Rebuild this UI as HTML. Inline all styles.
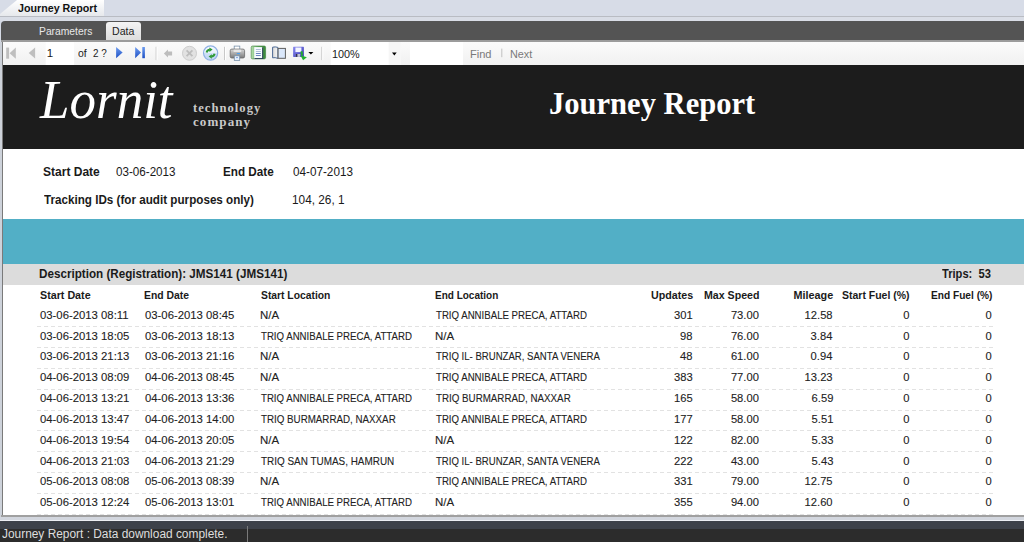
<!DOCTYPE html>
<html><head><meta charset="utf-8">
<style>
html,body{margin:0;padding:0;}
body{width:1024px;height:542px;position:relative;overflow:hidden;background:#d5dae5;font-family:"Liberation Sans",sans-serif;}
.a{position:absolute;}
.t{position:absolute;white-space:nowrap;line-height:0;}
.dash{position:absolute;left:37px;width:956px;height:1px;background-image:linear-gradient(to right,#e2e2e2 0,#e2e2e2 4px,transparent 4px);background-size:7px 1px;}
</style></head><body>
<!-- top title strip -->
<div class="a" style="left:0;top:0;width:1024px;height:16px;background:#d7dce7;"></div>
<div class="a" style="left:0;top:0;width:104px;height:16px;background:linear-gradient(#ffffff,#e6e8ec);clip-path:polygon(17px 0,104px 0,104px 16px,0 16px,0 14px);"></div>
<div class="a" style="left:0;top:16px;width:1024px;height:1px;background:#b9bcc3;"></div>
<div class="a" style="left:0;top:17px;width:1024px;height:4px;background:#d9dde6;"></div>
<!-- dark tab panel -->
<div class="a" style="left:1px;top:21px;width:1023px;height:20px;background:#545454;border-top-left-radius:4px;"></div>
<div class="a" style="left:106px;top:22px;width:35px;height:19px;background:linear-gradient(#f4f4f4,#dcdcdc);border-radius:3px 3px 0 0;"></div>
<div class="a" style="left:1px;top:40px;width:1023px;height:2px;background:#9c9c9c;"></div>
<!-- toolbar -->
<div class="a" style="left:0;top:42px;width:2px;height:475px;background:#cdd2da;"></div><div class="a" style="left:2px;top:42px;width:1px;height:475px;background:#7a7a7a;"></div>
<div class="a" style="left:3px;top:42px;width:1021px;height:23px;background:linear-gradient(#fbfbfb,#f1f1f1);"></div>
<!-- TOOLBAR -->
<svg class="a" style="left:0;top:42px" width="560" height="23" viewBox="0 0 560 23">
<defs>
<linearGradient id="gb" x1="0" y1="0" x2="0" y2="1"><stop offset="0" stop-color="#6c9cf0"/><stop offset="1" stop-color="#1d4fc4"/></linearGradient>
<linearGradient id="gr" x1="0" y1="0" x2="0" y2="1"><stop offset="0" stop-color="#f6faff"/><stop offset="0.5" stop-color="#e6f0fc"/><stop offset="0.5" stop-color="#cfe1f7"/><stop offset="1" stop-color="#bcd4f2"/></linearGradient>
<linearGradient id="gp" x1="0" y1="0" x2="0" y2="1"><stop offset="0" stop-color="#d8d8d8"/><stop offset="1" stop-color="#7a7a7a"/></linearGradient>
<linearGradient id="gf" x1="0" y1="0" x2="1" y2="1"><stop offset="0" stop-color="#8c8cf0"/><stop offset="1" stop-color="#3a3ab8"/></linearGradient>
<linearGradient id="gg" x1="0" y1="0" x2="1" y2="0"><stop offset="0" stop-color="#b8e0b0"/><stop offset="0.5" stop-color="#5aa858"/><stop offset="1" stop-color="#3a8a3a"/></linearGradient>
<linearGradient id="gbk" x1="0" y1="0" x2="1" y2="0"><stop offset="0" stop-color="#d8d8d8"/><stop offset="1" stop-color="#f8f8f8"/></linearGradient>
</defs>
<!-- page textbox -->
<rect x="45.7" y="0" width="28.4" height="23" fill="#ffffff"/>
<!-- first -->
<rect x="6.2" y="5.6" width="2.9" height="11.1" fill="#bfbfbf"/>
<polygon points="15.8,5.6 9.6,11.15 15.8,16.7" fill="#bfbfbf"/>
<!-- prev -->
<polygon points="35.1,5.6 28.7,11.0 35.1,16.4" fill="#bfbfbf"/>
<!-- next -->
<polygon points="116.1,5 122.6,10.6 116.1,16.2" fill="url(#gb)"/>
<!-- last -->
<polygon points="135.2,5 141,10.6 135.2,16.2" fill="url(#gb)"/>
<rect x="142.3" y="5" width="2.6" height="11.2" fill="url(#gb)"/>
<!-- separators -->
<rect x="155.6" y="4.8" width="1" height="13.3" fill="#c8c8c8"/><rect x="156.6" y="4.8" width="1" height="13.3" fill="#ffffff"/>
<rect x="224" y="4.8" width="1" height="13.3" fill="#c8c8c8"/><rect x="225" y="4.8" width="1" height="13.3" fill="#ffffff"/>
<rect x="321.3" y="4.8" width="1" height="13.3" fill="#c8c8c8"/><rect x="322.3" y="4.8" width="1" height="13.3" fill="#ffffff"/>
<!-- back arrow -->
<polygon points="163.9,11.5 168,7.5 168,9.6 172.1,9.6 172.1,13.4 168,13.4 168,15.4" fill="#bdbdbd"/>
<!-- stop -->
<circle cx="189.5" cy="11.3" r="7" fill="#e2e2e2" stroke="#cdcdcd" stroke-width="1"/>
<path d="M186.6 8.4 L192.4 14.2 M192.4 8.4 L186.6 14.2" stroke="#bdbdbd" stroke-width="1.8"/>
<!-- refresh -->
<circle cx="210.6" cy="11.05" r="7.1" fill="url(#gr)" stroke="#8fb0e4" stroke-width="1.2"/>
<path d="M206.6 10.4 Q207.2 7.9 209.8 7.7" stroke="#2e9a36" stroke-width="2" fill="none"/>
<polygon points="209.4,5.4 212.6,7.6 209.4,10.0" fill="#2e9a36"/>
<path d="M214.6 11.7 Q214.0 14.2 211.4 14.4" stroke="#2e9a36" stroke-width="2" fill="none"/>
<polygon points="211.8,12.2 208.6,14.4 211.8,16.8" fill="#2e9a36"/>
<!-- printer -->
<rect x="234.2" y="4.1" width="5.6" height="3.8" fill="#ffffff" stroke="#7890a8" stroke-width="0.8"/>
<rect x="230.2" y="7.1" width="14.4" height="8.9" rx="1.6" fill="url(#gp)" stroke="#6a6a6a" stroke-width="0.8"/>
<rect x="233.6" y="7.6" width="7.6" height="2.4" fill="#e6e6e6"/>
<rect x="236.8" y="11" width="3.3" height="1.1" fill="#4aa0f0"/>
<rect x="234.3" y="13.8" width="5.4" height="4.6" fill="#e6f0fc" stroke="#7890a8" stroke-width="0.8"/>
<circle cx="237" cy="15.6" r="0.7" fill="#3a70d0"/>
<!-- page layout -->
<rect x="251.2" y="4" width="14.4" height="12.9" rx="1.4" fill="url(#gg)" stroke="#3d7d3d" stroke-width="0.6"/>
<rect x="254.2" y="5.1" width="8.2" height="11.3" fill="#f8fbff"/>
<rect x="262.2" y="5.4" width="1" height="11.3" fill="#2a3a5a"/>
<rect x="254.6" y="16.1" width="8.6" height="0.9" fill="#2a3a5a"/>
<path d="M255.9 7.5 H260.8 M255.9 9.5 H260.8" stroke="#a8b8d4" stroke-width="0.9"/>
<path d="M255.9 11.5 H260.8 M255.9 13.5 H260.8" stroke="#5a78b8" stroke-width="0.9"/>
<!-- page setup (book) -->
<path d="M272.6 5.2 Q275.2 4.5 277.9 5.4 L277.9 16.4 Q275.2 15.2 272.6 15.8 Z" fill="url(#gbk)" stroke="#3a5a8a" stroke-width="0.9"/>
<rect x="278.1" y="6.4" width="7.3" height="9.9" fill="#dae7fa" stroke="#5e5e5e" stroke-width="1"/>
<!-- save -->
<rect x="293.1" y="4.7" width="10.8" height="10.2" rx="0.6" fill="url(#gf)"/>
<rect x="295.4" y="5.5" width="6" height="4.6" fill="#f2f4ff"/>
<rect x="295.8" y="12" width="4.4" height="2.9" fill="#c4c4d4"/>
<rect x="295.8" y="12" width="1.6" height="2.9" fill="#303050"/>
<path d="M301.4 9.2 L302.2 13.4" stroke="#22a830" stroke-width="2"/>
<polygon points="300.3,13.2 306.9,15.3 303.1,18.2" fill="#22b030"/>
<polygon points="308.4,9.9 313.4,9.9 310.9,12.6" fill="#000"/>
<!-- zoom combo -->
<rect x="330.7" y="0" width="70" height="23" fill="#ffffff"/>
<rect x="388.7" y="0" width="12" height="23" fill="#f6f6f6"/>
<polygon points="392,10.5 396.7,10.5 394.35,13.4" fill="#000"/>
<!-- find textbox -->
<rect x="410" y="0" width="53" height="23" fill="#ffffff"/>
<rect x="501.3" y="6.6" width="1" height="8.6" fill="#c0c0c0"/>
</svg>

<!-- report -->
<div class="a" style="left:3px;top:65px;width:1021px;height:450px;background:#fff;"></div>
<div class="a" style="left:3px;top:65px;width:1021px;height:84px;background:#1c1c1c;"></div>
<div class="a" style="left:3px;top:219px;width:1021px;height:45px;background:#52afc6;"></div>
<div class="a" style="left:3px;top:264px;width:1021px;height:21px;background:#dcdcdc;"></div>
<div class="dash" style="top:326px"></div>
<div class="dash" style="top:347px"></div>
<div class="dash" style="top:368px"></div>
<div class="dash" style="top:389px"></div>
<div class="dash" style="top:410px"></div>
<div class="dash" style="top:430px"></div>
<div class="dash" style="top:451px"></div>
<div class="dash" style="top:472px"></div>
<div class="dash" style="top:493px"></div>
<div class="dash" style="top:514px"></div>

<!-- bottom -->
<div class="a" style="left:1px;top:515px;width:1023px;height:2px;background:#a0a0a0;"></div>
<div class="a" style="left:0;top:517px;width:1024px;height:3px;background:#d2d6de;"></div>
<div class="a" style="left:0;top:520px;width:1024px;height:1px;background:#eceef3;"></div>
<div class="a" style="left:0;top:521px;width:1024px;height:8px;background:#3d4149;"></div>
<div class="a" style="left:0;top:529px;width:1024px;height:13px;background:#2c2c2c;"></div>
<div class="a" style="left:247px;top:526px;width:1px;height:16px;background:#7a7a7a;"></div>
<div class="t" style="left:43.04px;top:171.60px;font-family:'Liberation Sans', sans-serif;font-size:12.5px;font-weight:700;color:#1a1a1a;transform:scaleX(0.9621);transform-origin:0 0;">Start Date</div>
<div class="t" style="left:116.40px;top:171.60px;font-family:'Liberation Sans', sans-serif;font-size:12.5px;font-weight:400;color:#1a1a1a;transform:scaleX(0.9312);transform-origin:0 0;">03-06-2013</div>
<div class="t" style="left:223.46px;top:171.60px;font-family:'Liberation Sans', sans-serif;font-size:12.5px;font-weight:700;color:#1a1a1a;transform:scaleX(0.9358);transform-origin:0 0;">End Date</div>
<div class="t" style="left:293.00px;top:171.60px;font-family:'Liberation Sans', sans-serif;font-size:12.5px;font-weight:400;color:#1a1a1a;transform:scaleX(0.9375);transform-origin:0 0;">04-07-2013</div>
<div class="t" style="left:44.00px;top:200.20px;font-family:'Liberation Sans', sans-serif;font-size:12.5px;font-weight:700;color:#1a1a1a;transform:scaleX(0.9330);transform-origin:0 0;">Tracking IDs (for audit purposes only)</div>
<div class="t" style="left:292.06px;top:200.20px;font-family:'Liberation Sans', sans-serif;font-size:12.5px;font-weight:400;color:#1a1a1a;transform:scaleX(0.9444);transform-origin:0 0;">104, 26, 1</div>
<div class="t" style="left:38.67px;top:274.00px;font-family:'Liberation Sans', sans-serif;font-size:12.5px;font-weight:700;color:#1a1a1a;transform:scaleX(0.9333);transform-origin:0 0;">Description (Registration): JMS141 (JMS141)</div>
<div class="t" style="left:942.40px;top:274.00px;font-family:'Liberation Sans', sans-serif;font-size:12.5px;font-weight:700;color:#1a1a1a;transform:scaleX(0.8909);transform-origin:0 0;">Trips:&nbsp; 53</div>
<div class="t" style="left:39.60px;top:294.70px;font-family:'Liberation Sans', sans-serif;font-size:10.8px;font-weight:700;color:#1a1a1a;transform:scaleX(0.9922);transform-origin:0 0;">Start Date</div>
<div class="t" style="left:143.84px;top:294.70px;font-family:'Liberation Sans', sans-serif;font-size:10.8px;font-weight:700;color:#1a1a1a;transform:scaleX(0.9630);transform-origin:0 0;">End Date</div>
<div class="t" style="left:261.30px;top:294.70px;font-family:'Liberation Sans', sans-serif;font-size:10.8px;font-weight:700;color:#1a1a1a;transform:scaleX(0.9556);transform-origin:0 0;">Start Location</div>
<div class="t" style="left:434.77px;top:294.70px;font-family:'Liberation Sans', sans-serif;font-size:10.8px;font-weight:700;color:#1a1a1a;transform:scaleX(0.9254);transform-origin:0 0;">End Location</div>
<div class="t" style="left:650.51px;top:294.70px;font-family:'Liberation Sans', sans-serif;font-size:10.8px;font-weight:700;color:#1a1a1a;transform:scaleX(0.9902);transform-origin:0 0;">Updates</div>
<div class="t" style="left:703.82px;top:294.70px;font-family:'Liberation Sans', sans-serif;font-size:10.8px;font-weight:700;color:#1a1a1a;transform:scaleX(0.9836);transform-origin:0 0;">Max Speed</div>
<div class="t" style="left:793.60px;top:294.70px;font-family:'Liberation Sans', sans-serif;font-size:10.8px;font-weight:700;color:#1a1a1a;">Mileage</div>
<div class="t" style="left:842.30px;top:294.70px;font-family:'Liberation Sans', sans-serif;font-size:10.8px;font-weight:700;color:#1a1a1a;transform:scaleX(0.9710);transform-origin:0 0;">Start Fuel (%)</div>
<div class="t" style="left:930.56px;top:294.70px;font-family:'Liberation Sans', sans-serif;font-size:10.8px;font-weight:700;color:#1a1a1a;transform:scaleX(0.9391);transform-origin:0 0;">End Fuel (%)</div>
<div class="t" style="left:39.60px;top:314.70px;font-family:'Liberation Sans', sans-serif;font-size:11.2px;font-weight:400;color:#222222;-webkit-text-stroke:0.1px #222222;transform:scaleX(1.0120);transform-origin:0 0;">03-06-2013 08:11</div>
<div class="t" style="left:144.80px;top:314.70px;font-family:'Liberation Sans', sans-serif;font-size:11.2px;font-weight:400;color:#222222;-webkit-text-stroke:0.1px #222222;transform:scaleX(1.0120);transform-origin:0 0;">03-06-2013 08:45</div>
<div class="t" style="left:260.22px;top:314.70px;font-family:'Liberation Sans', sans-serif;font-size:10.6px;font-weight:400;color:#222222;-webkit-text-stroke:0.1px #222222;transform:scaleX(1.0824);transform-origin:0 0;">N/A</div>
<div class="t" style="left:435.70px;top:314.70px;font-family:'Liberation Sans', sans-serif;font-size:10.6px;font-weight:400;color:#222222;-webkit-text-stroke:0.1px #222222;transform:scaleX(0.9109);transform-origin:0 0;">TRIQ ANNIBALE PRECA, ATTARD</div>
<div class="t" style="left:674.10px;top:314.70px;font-family:'Liberation Sans', sans-serif;font-size:11.2px;font-weight:400;color:#222222;-webkit-text-stroke:0.1px #222222;">301</div>
<div class="t" style="left:730.90px;top:314.70px;font-family:'Liberation Sans', sans-serif;font-size:11.2px;font-weight:400;color:#222222;-webkit-text-stroke:0.1px #222222;">73.00</div>
<div class="t" style="left:804.60px;top:314.70px;font-family:'Liberation Sans', sans-serif;font-size:11.2px;font-weight:400;color:#222222;-webkit-text-stroke:0.1px #222222;">12.58</div>
<div class="t" style="left:903.30px;top:314.70px;font-family:'Liberation Sans', sans-serif;font-size:11.2px;font-weight:400;color:#222222;-webkit-text-stroke:0.1px #222222;">0</div>
<div class="t" style="left:985.60px;top:314.70px;font-family:'Liberation Sans', sans-serif;font-size:11.2px;font-weight:400;color:#222222;-webkit-text-stroke:0.1px #222222;">0</div>
<div class="t" style="left:39.60px;top:335.53px;font-family:'Liberation Sans', sans-serif;font-size:11.2px;font-weight:400;color:#222222;-webkit-text-stroke:0.1px #222222;transform:scaleX(1.0120);transform-origin:0 0;">03-06-2013 18:05</div>
<div class="t" style="left:144.80px;top:335.53px;font-family:'Liberation Sans', sans-serif;font-size:11.2px;font-weight:400;color:#222222;-webkit-text-stroke:0.1px #222222;transform:scaleX(1.0120);transform-origin:0 0;">03-06-2013 18:13</div>
<div class="t" style="left:261.30px;top:335.53px;font-family:'Liberation Sans', sans-serif;font-size:10.6px;font-weight:400;color:#222222;-webkit-text-stroke:0.1px #222222;transform:scaleX(0.9109);transform-origin:0 0;">TRIQ ANNIBALE PRECA, ATTARD</div>
<div class="t" style="left:434.62px;top:335.53px;font-family:'Liberation Sans', sans-serif;font-size:10.6px;font-weight:400;color:#222222;-webkit-text-stroke:0.1px #222222;transform:scaleX(1.0824);transform-origin:0 0;">N/A</div>
<div class="t" style="left:680.10px;top:335.53px;font-family:'Liberation Sans', sans-serif;font-size:11.2px;font-weight:400;color:#222222;-webkit-text-stroke:0.1px #222222;">98</div>
<div class="t" style="left:730.90px;top:335.53px;font-family:'Liberation Sans', sans-serif;font-size:11.2px;font-weight:400;color:#222222;-webkit-text-stroke:0.1px #222222;">76.00</div>
<div class="t" style="left:810.60px;top:335.53px;font-family:'Liberation Sans', sans-serif;font-size:11.2px;font-weight:400;color:#222222;-webkit-text-stroke:0.1px #222222;">3.84</div>
<div class="t" style="left:903.30px;top:335.53px;font-family:'Liberation Sans', sans-serif;font-size:11.2px;font-weight:400;color:#222222;-webkit-text-stroke:0.1px #222222;">0</div>
<div class="t" style="left:985.60px;top:335.53px;font-family:'Liberation Sans', sans-serif;font-size:11.2px;font-weight:400;color:#222222;-webkit-text-stroke:0.1px #222222;">0</div>
<div class="t" style="left:39.60px;top:356.36px;font-family:'Liberation Sans', sans-serif;font-size:11.2px;font-weight:400;color:#222222;-webkit-text-stroke:0.1px #222222;transform:scaleX(1.0120);transform-origin:0 0;">03-06-2013 21:13</div>
<div class="t" style="left:144.80px;top:356.36px;font-family:'Liberation Sans', sans-serif;font-size:11.2px;font-weight:400;color:#222222;-webkit-text-stroke:0.1px #222222;transform:scaleX(1.0120);transform-origin:0 0;">03-06-2013 21:16</div>
<div class="t" style="left:260.22px;top:356.36px;font-family:'Liberation Sans', sans-serif;font-size:10.6px;font-weight:400;color:#222222;-webkit-text-stroke:0.1px #222222;transform:scaleX(1.0824);transform-origin:0 0;">N/A</div>
<div class="t" style="left:435.70px;top:356.36px;font-family:'Liberation Sans', sans-serif;font-size:10.6px;font-weight:400;color:#222222;-webkit-text-stroke:0.1px #222222;transform:scaleX(0.9050);transform-origin:0 0;">TRIQ IL- BRUNZAR, SANTA VENERA</div>
<div class="t" style="left:680.10px;top:356.36px;font-family:'Liberation Sans', sans-serif;font-size:11.2px;font-weight:400;color:#222222;-webkit-text-stroke:0.1px #222222;">48</div>
<div class="t" style="left:730.90px;top:356.36px;font-family:'Liberation Sans', sans-serif;font-size:11.2px;font-weight:400;color:#222222;-webkit-text-stroke:0.1px #222222;">61.00</div>
<div class="t" style="left:810.60px;top:356.36px;font-family:'Liberation Sans', sans-serif;font-size:11.2px;font-weight:400;color:#222222;-webkit-text-stroke:0.1px #222222;">0.94</div>
<div class="t" style="left:903.30px;top:356.36px;font-family:'Liberation Sans', sans-serif;font-size:11.2px;font-weight:400;color:#222222;-webkit-text-stroke:0.1px #222222;">0</div>
<div class="t" style="left:985.60px;top:356.36px;font-family:'Liberation Sans', sans-serif;font-size:11.2px;font-weight:400;color:#222222;-webkit-text-stroke:0.1px #222222;">0</div>
<div class="t" style="left:39.60px;top:377.19px;font-family:'Liberation Sans', sans-serif;font-size:11.2px;font-weight:400;color:#222222;-webkit-text-stroke:0.1px #222222;transform:scaleX(1.0120);transform-origin:0 0;">04-06-2013 08:09</div>
<div class="t" style="left:144.80px;top:377.19px;font-family:'Liberation Sans', sans-serif;font-size:11.2px;font-weight:400;color:#222222;-webkit-text-stroke:0.1px #222222;transform:scaleX(1.0120);transform-origin:0 0;">04-06-2013 08:45</div>
<div class="t" style="left:260.22px;top:377.19px;font-family:'Liberation Sans', sans-serif;font-size:10.6px;font-weight:400;color:#222222;-webkit-text-stroke:0.1px #222222;transform:scaleX(1.0824);transform-origin:0 0;">N/A</div>
<div class="t" style="left:435.70px;top:377.19px;font-family:'Liberation Sans', sans-serif;font-size:10.6px;font-weight:400;color:#222222;-webkit-text-stroke:0.1px #222222;transform:scaleX(0.9109);transform-origin:0 0;">TRIQ ANNIBALE PRECA, ATTARD</div>
<div class="t" style="left:674.10px;top:377.19px;font-family:'Liberation Sans', sans-serif;font-size:11.2px;font-weight:400;color:#222222;-webkit-text-stroke:0.1px #222222;">383</div>
<div class="t" style="left:730.90px;top:377.19px;font-family:'Liberation Sans', sans-serif;font-size:11.2px;font-weight:400;color:#222222;-webkit-text-stroke:0.1px #222222;">77.00</div>
<div class="t" style="left:804.60px;top:377.19px;font-family:'Liberation Sans', sans-serif;font-size:11.2px;font-weight:400;color:#222222;-webkit-text-stroke:0.1px #222222;">13.23</div>
<div class="t" style="left:903.30px;top:377.19px;font-family:'Liberation Sans', sans-serif;font-size:11.2px;font-weight:400;color:#222222;-webkit-text-stroke:0.1px #222222;">0</div>
<div class="t" style="left:985.60px;top:377.19px;font-family:'Liberation Sans', sans-serif;font-size:11.2px;font-weight:400;color:#222222;-webkit-text-stroke:0.1px #222222;">0</div>
<div class="t" style="left:39.60px;top:398.02px;font-family:'Liberation Sans', sans-serif;font-size:11.2px;font-weight:400;color:#222222;-webkit-text-stroke:0.1px #222222;transform:scaleX(1.0120);transform-origin:0 0;">04-06-2013 13:21</div>
<div class="t" style="left:144.80px;top:398.02px;font-family:'Liberation Sans', sans-serif;font-size:11.2px;font-weight:400;color:#222222;-webkit-text-stroke:0.1px #222222;transform:scaleX(1.0120);transform-origin:0 0;">04-06-2013 13:36</div>
<div class="t" style="left:261.30px;top:398.02px;font-family:'Liberation Sans', sans-serif;font-size:10.6px;font-weight:400;color:#222222;-webkit-text-stroke:0.1px #222222;transform:scaleX(0.9109);transform-origin:0 0;">TRIQ ANNIBALE PRECA, ATTARD</div>
<div class="t" style="left:435.70px;top:398.02px;font-family:'Liberation Sans', sans-serif;font-size:10.6px;font-weight:400;color:#222222;-webkit-text-stroke:0.1px #222222;transform:scaleX(0.9228);transform-origin:0 0;">TRIQ BURMARRAD, NAXXAR</div>
<div class="t" style="left:674.10px;top:398.02px;font-family:'Liberation Sans', sans-serif;font-size:11.2px;font-weight:400;color:#222222;-webkit-text-stroke:0.1px #222222;">165</div>
<div class="t" style="left:730.90px;top:398.02px;font-family:'Liberation Sans', sans-serif;font-size:11.2px;font-weight:400;color:#222222;-webkit-text-stroke:0.1px #222222;">58.00</div>
<div class="t" style="left:811.60px;top:398.02px;font-family:'Liberation Sans', sans-serif;font-size:11.2px;font-weight:400;color:#222222;-webkit-text-stroke:0.1px #222222;">6.59</div>
<div class="t" style="left:903.30px;top:398.02px;font-family:'Liberation Sans', sans-serif;font-size:11.2px;font-weight:400;color:#222222;-webkit-text-stroke:0.1px #222222;">0</div>
<div class="t" style="left:985.60px;top:398.02px;font-family:'Liberation Sans', sans-serif;font-size:11.2px;font-weight:400;color:#222222;-webkit-text-stroke:0.1px #222222;">0</div>
<div class="t" style="left:39.60px;top:418.85px;font-family:'Liberation Sans', sans-serif;font-size:11.2px;font-weight:400;color:#222222;-webkit-text-stroke:0.1px #222222;transform:scaleX(1.0120);transform-origin:0 0;">04-06-2013 13:47</div>
<div class="t" style="left:144.80px;top:418.85px;font-family:'Liberation Sans', sans-serif;font-size:11.2px;font-weight:400;color:#222222;-webkit-text-stroke:0.1px #222222;transform:scaleX(1.0120);transform-origin:0 0;">04-06-2013 14:00</div>
<div class="t" style="left:261.30px;top:418.85px;font-family:'Liberation Sans', sans-serif;font-size:10.6px;font-weight:400;color:#222222;-webkit-text-stroke:0.1px #222222;transform:scaleX(0.9228);transform-origin:0 0;">TRIQ BURMARRAD, NAXXAR</div>
<div class="t" style="left:435.70px;top:418.85px;font-family:'Liberation Sans', sans-serif;font-size:10.6px;font-weight:400;color:#222222;-webkit-text-stroke:0.1px #222222;transform:scaleX(0.9109);transform-origin:0 0;">TRIQ ANNIBALE PRECA, ATTARD</div>
<div class="t" style="left:674.10px;top:418.85px;font-family:'Liberation Sans', sans-serif;font-size:11.2px;font-weight:400;color:#222222;-webkit-text-stroke:0.1px #222222;">177</div>
<div class="t" style="left:730.90px;top:418.85px;font-family:'Liberation Sans', sans-serif;font-size:11.2px;font-weight:400;color:#222222;-webkit-text-stroke:0.1px #222222;">58.00</div>
<div class="t" style="left:811.60px;top:418.85px;font-family:'Liberation Sans', sans-serif;font-size:11.2px;font-weight:400;color:#222222;-webkit-text-stroke:0.1px #222222;">5.51</div>
<div class="t" style="left:903.30px;top:418.85px;font-family:'Liberation Sans', sans-serif;font-size:11.2px;font-weight:400;color:#222222;-webkit-text-stroke:0.1px #222222;">0</div>
<div class="t" style="left:985.60px;top:418.85px;font-family:'Liberation Sans', sans-serif;font-size:11.2px;font-weight:400;color:#222222;-webkit-text-stroke:0.1px #222222;">0</div>
<div class="t" style="left:39.60px;top:439.68px;font-family:'Liberation Sans', sans-serif;font-size:11.2px;font-weight:400;color:#222222;-webkit-text-stroke:0.1px #222222;transform:scaleX(1.0120);transform-origin:0 0;">04-06-2013 19:54</div>
<div class="t" style="left:144.80px;top:439.68px;font-family:'Liberation Sans', sans-serif;font-size:11.2px;font-weight:400;color:#222222;-webkit-text-stroke:0.1px #222222;transform:scaleX(1.0120);transform-origin:0 0;">04-06-2013 20:05</div>
<div class="t" style="left:260.22px;top:439.68px;font-family:'Liberation Sans', sans-serif;font-size:10.6px;font-weight:400;color:#222222;-webkit-text-stroke:0.1px #222222;transform:scaleX(1.0824);transform-origin:0 0;">N/A</div>
<div class="t" style="left:434.62px;top:439.68px;font-family:'Liberation Sans', sans-serif;font-size:10.6px;font-weight:400;color:#222222;-webkit-text-stroke:0.1px #222222;transform:scaleX(1.0824);transform-origin:0 0;">N/A</div>
<div class="t" style="left:674.10px;top:439.68px;font-family:'Liberation Sans', sans-serif;font-size:11.2px;font-weight:400;color:#222222;-webkit-text-stroke:0.1px #222222;">122</div>
<div class="t" style="left:730.90px;top:439.68px;font-family:'Liberation Sans', sans-serif;font-size:11.2px;font-weight:400;color:#222222;-webkit-text-stroke:0.1px #222222;">82.00</div>
<div class="t" style="left:811.60px;top:439.68px;font-family:'Liberation Sans', sans-serif;font-size:11.2px;font-weight:400;color:#222222;-webkit-text-stroke:0.1px #222222;">5.33</div>
<div class="t" style="left:903.30px;top:439.68px;font-family:'Liberation Sans', sans-serif;font-size:11.2px;font-weight:400;color:#222222;-webkit-text-stroke:0.1px #222222;">0</div>
<div class="t" style="left:985.60px;top:439.68px;font-family:'Liberation Sans', sans-serif;font-size:11.2px;font-weight:400;color:#222222;-webkit-text-stroke:0.1px #222222;">0</div>
<div class="t" style="left:39.60px;top:460.51px;font-family:'Liberation Sans', sans-serif;font-size:11.2px;font-weight:400;color:#222222;-webkit-text-stroke:0.1px #222222;transform:scaleX(1.0120);transform-origin:0 0;">04-06-2013 21:03</div>
<div class="t" style="left:144.80px;top:460.51px;font-family:'Liberation Sans', sans-serif;font-size:11.2px;font-weight:400;color:#222222;-webkit-text-stroke:0.1px #222222;transform:scaleX(1.0120);transform-origin:0 0;">04-06-2013 21:29</div>
<div class="t" style="left:261.30px;top:460.51px;font-family:'Liberation Sans', sans-serif;font-size:10.6px;font-weight:400;color:#222222;-webkit-text-stroke:0.1px #222222;transform:scaleX(0.9366);transform-origin:0 0;">TRIQ SAN TUMAS, HAMRUN</div>
<div class="t" style="left:435.70px;top:460.51px;font-family:'Liberation Sans', sans-serif;font-size:10.6px;font-weight:400;color:#222222;-webkit-text-stroke:0.1px #222222;transform:scaleX(0.9050);transform-origin:0 0;">TRIQ IL- BRUNZAR, SANTA VENERA</div>
<div class="t" style="left:674.10px;top:460.51px;font-family:'Liberation Sans', sans-serif;font-size:11.2px;font-weight:400;color:#222222;-webkit-text-stroke:0.1px #222222;">222</div>
<div class="t" style="left:730.90px;top:460.51px;font-family:'Liberation Sans', sans-serif;font-size:11.2px;font-weight:400;color:#222222;-webkit-text-stroke:0.1px #222222;">43.00</div>
<div class="t" style="left:811.60px;top:460.51px;font-family:'Liberation Sans', sans-serif;font-size:11.2px;font-weight:400;color:#222222;-webkit-text-stroke:0.1px #222222;">5.43</div>
<div class="t" style="left:903.30px;top:460.51px;font-family:'Liberation Sans', sans-serif;font-size:11.2px;font-weight:400;color:#222222;-webkit-text-stroke:0.1px #222222;">0</div>
<div class="t" style="left:985.60px;top:460.51px;font-family:'Liberation Sans', sans-serif;font-size:11.2px;font-weight:400;color:#222222;-webkit-text-stroke:0.1px #222222;">0</div>
<div class="t" style="left:39.60px;top:481.34px;font-family:'Liberation Sans', sans-serif;font-size:11.2px;font-weight:400;color:#222222;-webkit-text-stroke:0.1px #222222;transform:scaleX(1.0120);transform-origin:0 0;">05-06-2013 08:08</div>
<div class="t" style="left:144.80px;top:481.34px;font-family:'Liberation Sans', sans-serif;font-size:11.2px;font-weight:400;color:#222222;-webkit-text-stroke:0.1px #222222;transform:scaleX(1.0120);transform-origin:0 0;">05-06-2013 08:39</div>
<div class="t" style="left:260.22px;top:481.34px;font-family:'Liberation Sans', sans-serif;font-size:10.6px;font-weight:400;color:#222222;-webkit-text-stroke:0.1px #222222;transform:scaleX(1.0824);transform-origin:0 0;">N/A</div>
<div class="t" style="left:435.70px;top:481.34px;font-family:'Liberation Sans', sans-serif;font-size:10.6px;font-weight:400;color:#222222;-webkit-text-stroke:0.1px #222222;transform:scaleX(0.9109);transform-origin:0 0;">TRIQ ANNIBALE PRECA, ATTARD</div>
<div class="t" style="left:674.10px;top:481.34px;font-family:'Liberation Sans', sans-serif;font-size:11.2px;font-weight:400;color:#222222;-webkit-text-stroke:0.1px #222222;">331</div>
<div class="t" style="left:730.90px;top:481.34px;font-family:'Liberation Sans', sans-serif;font-size:11.2px;font-weight:400;color:#222222;-webkit-text-stroke:0.1px #222222;">79.00</div>
<div class="t" style="left:804.60px;top:481.34px;font-family:'Liberation Sans', sans-serif;font-size:11.2px;font-weight:400;color:#222222;-webkit-text-stroke:0.1px #222222;">12.75</div>
<div class="t" style="left:903.30px;top:481.34px;font-family:'Liberation Sans', sans-serif;font-size:11.2px;font-weight:400;color:#222222;-webkit-text-stroke:0.1px #222222;">0</div>
<div class="t" style="left:985.60px;top:481.34px;font-family:'Liberation Sans', sans-serif;font-size:11.2px;font-weight:400;color:#222222;-webkit-text-stroke:0.1px #222222;">0</div>
<div class="t" style="left:39.60px;top:502.17px;font-family:'Liberation Sans', sans-serif;font-size:11.2px;font-weight:400;color:#222222;-webkit-text-stroke:0.1px #222222;transform:scaleX(1.0120);transform-origin:0 0;">05-06-2013 12:24</div>
<div class="t" style="left:144.80px;top:502.17px;font-family:'Liberation Sans', sans-serif;font-size:11.2px;font-weight:400;color:#222222;-webkit-text-stroke:0.1px #222222;transform:scaleX(1.0120);transform-origin:0 0;">05-06-2013 13:01</div>
<div class="t" style="left:261.30px;top:502.17px;font-family:'Liberation Sans', sans-serif;font-size:10.6px;font-weight:400;color:#222222;-webkit-text-stroke:0.1px #222222;transform:scaleX(0.9109);transform-origin:0 0;">TRIQ ANNIBALE PRECA, ATTARD</div>
<div class="t" style="left:434.62px;top:502.17px;font-family:'Liberation Sans', sans-serif;font-size:10.6px;font-weight:400;color:#222222;-webkit-text-stroke:0.1px #222222;transform:scaleX(1.0824);transform-origin:0 0;">N/A</div>
<div class="t" style="left:674.10px;top:502.17px;font-family:'Liberation Sans', sans-serif;font-size:11.2px;font-weight:400;color:#222222;-webkit-text-stroke:0.1px #222222;">355</div>
<div class="t" style="left:730.90px;top:502.17px;font-family:'Liberation Sans', sans-serif;font-size:11.2px;font-weight:400;color:#222222;-webkit-text-stroke:0.1px #222222;">94.00</div>
<div class="t" style="left:804.60px;top:502.17px;font-family:'Liberation Sans', sans-serif;font-size:11.2px;font-weight:400;color:#222222;-webkit-text-stroke:0.1px #222222;">12.60</div>
<div class="t" style="left:903.30px;top:502.17px;font-family:'Liberation Sans', sans-serif;font-size:11.2px;font-weight:400;color:#222222;-webkit-text-stroke:0.1px #222222;">0</div>
<div class="t" style="left:985.60px;top:502.17px;font-family:'Liberation Sans', sans-serif;font-size:11.2px;font-weight:400;color:#222222;-webkit-text-stroke:0.1px #222222;">0</div>
<div class="t" style="left:2.40px;top:534.20px;font-family:'Liberation Sans', sans-serif;font-size:12.5px;font-weight:400;color:#dedede;transform:scaleX(0.9517);transform-origin:0 0;">Journey Report : Data download complete.</div>
<div class="t" style="left:46.80px;top:52.60px;font-family:'Liberation Sans', sans-serif;font-size:11.5px;font-weight:400;color:#1a1a1a;">1</div>
<div class="t" style="left:78.40px;top:52.60px;font-family:'Liberation Sans', sans-serif;font-size:11.5px;font-weight:400;color:#1a1a1a;transform:scaleX(0.9100);transform-origin:0 0;">of</div>
<div class="t" style="left:93.14px;top:52.60px;font-family:'Liberation Sans', sans-serif;font-size:11.5px;font-weight:400;color:#1a1a1a;transform:scaleX(0.8600);transform-origin:0 0;">2 ?</div>
<div class="t" style="left:332.36px;top:53.60px;font-family:'Liberation Sans', sans-serif;font-size:11.5px;font-weight:400;color:#1a1a1a;transform:scaleX(0.9429);transform-origin:0 0;">100%</div>
<div class="t" style="left:470.04px;top:53.60px;font-family:'Liberation Sans', sans-serif;font-size:11.5px;font-weight:400;color:#7a7a7a;transform:scaleX(0.9619);transform-origin:0 0;">Find</div>
<div class="t" style="left:509.56px;top:53.60px;font-family:'Liberation Sans', sans-serif;font-size:11.5px;font-weight:400;color:#7a7a7a;transform:scaleX(0.9435);transform-origin:0 0;">Next</div>
<div class="t" style="left:39.98px;top:100.20px;font-family:'Liberation Serif', serif;font-size:54px;font-weight:400;color:#ffffff;font-style:italic;transform:scaleX(0.9818);transform-origin:0 0;">Lornit</div>
<div class="t" style="left:193.30px;top:107.90px;font-family:'Liberation Serif', serif;font-size:12.5px;font-weight:700;color:#c9c9c9;letter-spacing:1px;transform:scaleX(1.0104);transform-origin:0 0;">technology</div>
<div class="t" style="left:193.30px;top:122.30px;font-family:'Liberation Serif', serif;font-size:12.5px;font-weight:700;color:#c9c9c9;letter-spacing:1px;transform:scaleX(1.0444);transform-origin:0 0;">company</div>
<div class="t" style="left:549.25px;top:102.80px;font-family:'Liberation Serif', serif;font-size:32px;font-weight:700;color:#ffffff;transform:scaleX(0.9549);transform-origin:0 0;">Journey Report</div>
<div class="t" style="left:18.30px;top:7.70px;font-family:'Liberation Sans', sans-serif;font-size:11.5px;font-weight:700;color:#111111;transform:scaleX(0.9306);transform-origin:0 0;">Journey Report</div>
<div class="t" style="left:39.40px;top:31.20px;font-family:'Liberation Sans', sans-serif;font-size:11.5px;font-weight:400;color:#e8e8e8;transform:scaleX(0.8966);transform-origin:0 0;">Parameters</div>
<div class="t" style="left:111.88px;top:31.20px;font-family:'Liberation Sans', sans-serif;font-size:11.5px;font-weight:400;color:#222222;transform:scaleX(0.9217);transform-origin:0 0;">Data</div>
</body></html>
